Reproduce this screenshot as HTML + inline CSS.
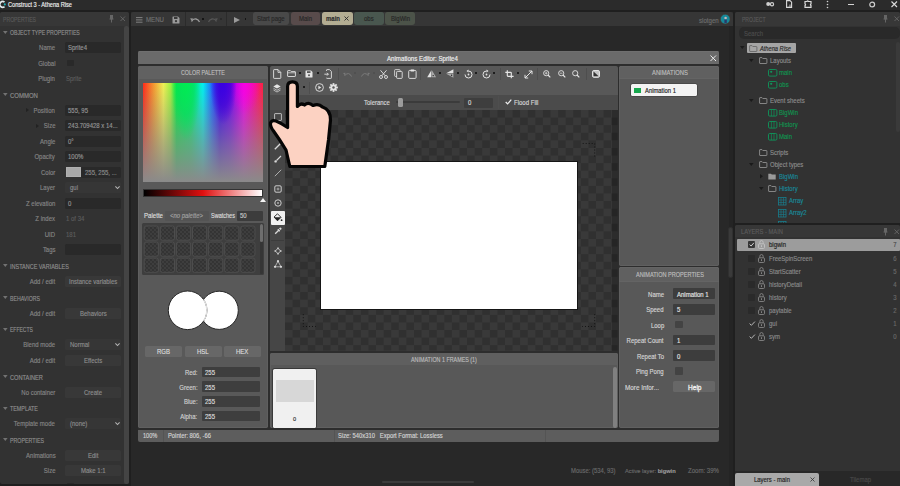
<!DOCTYPE html><html><head><meta charset="utf-8"><style>
*{margin:0;padding:0;box-sizing:border-box}
html,body{width:900px;height:486px;overflow:hidden;background:#1f1f1f;font-family:"Liberation Sans",sans-serif}
.a{position:absolute}
.t{position:absolute;white-space:pre;line-height:1;transform-origin:left center;-webkit-text-stroke-width:0.15px}
svg{position:absolute;overflow:visible}
</style></head><body><div class="a" style="left:0px;top:0px;width:900px;height:10px;background:#2b2b2b;"></div>
<svg style="left:0px;top:0px;" width="8" height="10" viewBox="0 0 8 10"><path d="M4.5 2.2A2.85 2.85 0 1 0 4.5 6.6" fill="none" stroke="#e4ecef" stroke-width="1.7"/><circle cx="4.8" cy="4.4" r="1.05" fill="#19b0b8"/></svg>
<div class="t" style="left:7.6px;top:5.15px;font-size:6.63px;color:#f0f0f0;transform:translateY(-50%) scaleX(0.847);">Construct 3 - Athena Rise</div>
<svg style="left:766px;top:1.4px;" width="9" height="6" viewBox="0 0 9 6"><circle cx="2.2" cy="3" r="2" fill="#cfcfcf"/><circle cx="6" cy="3.3" r="1.6" fill="none" stroke="#cfcfcf" stroke-width="1.2"/></svg>
<svg style="left:786px;top:0.4px;" width="7" height="8" viewBox="0 0 7 8"><path d="M0.6 0.6H4L5.6 2.2V7.4H0.6Z" fill="none" stroke="#dcdcdc" stroke-width="1.1"/><path d="M4 4.5V7.8M3 6.8L4 7.8L5 6.8" stroke="#dcdcdc" stroke-width="0.9" fill="none"/></svg>
<svg style="left:804px;top:0.4px;" width="8" height="8" viewBox="0 0 8 8"><path d="M1 1.5H3Q3.5 0.3 4.5 1.5H7V4Q5.8 4.5 7 5.5V7.3H1V5.5Q2.2 4.6 1 4Z" fill="none" stroke="#dcdcdc" stroke-width="1.2"/></svg>
<svg style="left:826px;top:0.4px;" width="3" height="8" viewBox="0 0 3 8"><circle cx="1.5" cy="1.5" r="0.8" fill="#cfcfcf"/><circle cx="1.5" cy="4.5" r="0.8" fill="#cfcfcf"/><circle cx="1.5" cy="7.5" r="0.8" fill="#cfcfcf"/></svg>
<div class="a" style="left:848px;top:3.8px;width:5.5px;height:1.1px;background:#d4d4d4;"></div>
<svg style="left:869px;top:0.8px;" width="7" height="7" viewBox="0 0 7 7"><circle cx="3.2" cy="3.5" r="2.4" fill="none" stroke="#cfcfcf" stroke-width="1.2"/></svg>
<svg style="left:891px;top:0.8px;" width="7" height="7" viewBox="0 0 7 7"><path d="M0.5 0.5L6 6M6 0.5L0.5 6" stroke="#dcdcdc" stroke-width="1.1"/></svg>
<div class="a" style="left:0px;top:12px;width:129px;height:472.4px;background:#323232;border-radius:2px;"></div>
<div class="a" style="left:0px;top:12px;width:129px;height:14px;background:#373737;border-radius:2px 2px 0 0;"></div>
<div class="t" style="left:2.8px;top:20.35px;font-size:6.74px;color:#5a5a5a;transform:translateY(-50%) scaleX(0.762);">PROPERTIES</div>
<svg style="left:109px;top:15px;" width="5" height="8" viewBox="0 0 5 8"><path d="M1 0.5H4M1.5 0.5V4H3.5V0.5M0.5 4H4.5M2.5 4V7.5" stroke="#666" stroke-width="1" fill="#666"/></svg>
<svg style="left:119.8px;top:16px;" width="6" height="6" viewBox="0 0 6 6"><path d="M0.5 0.5L5 5M5 0.5L0.5 5" stroke="#666" stroke-width="0.9"/></svg>
<div class="a" style="left:124px;top:26px;width:4.5px;height:458.2px;background:#444444;border-radius:2px;"></div>
<svg style="left:2.5px;top:30.5px;" width="5" height="4" viewBox="0 0 5 4"><path d="M0 0H4.6L2.3 3Z" fill="#727272"/></svg>
<div class="t" style="left:10px;top:33.15px;font-size:6.42px;color:#8e8e8e;transform:translateY(-50%) scaleX(0.807);">OBJECT TYPE PROPERTIES</div>
<div class="t" style="right:844.8px;top:48.00px;font-size:6.42px;color:#858585;transform-origin:right center;transform:translateY(-50%) scaleX(0.935);">Name</div>
<div class="a" style="left:65px;top:42.05px;width:56px;height:11px;background:#292929;border-radius:1.5px;"></div>
<div class="t" style="left:67.5px;top:48.00px;font-size:6.42px;color:#959595;transform:translateY(-50%) scaleX(0.935);">Sprite4</div>
<div class="t" style="right:844.8px;top:63.50px;font-size:6.42px;color:#858585;transform-origin:right center;transform:translateY(-50%) scaleX(0.935);">Global</div>
<div class="a" style="left:67.3px;top:59.75px;width:7px;height:6.6px;background:#292929;border-radius:1px;"></div>
<div class="t" style="right:844.8px;top:79.00px;font-size:6.42px;color:#858585;transform-origin:right center;transform:translateY(-50%) scaleX(0.935);">Plugin</div>
<div class="t" style="left:66px;top:79.00px;font-size:6.42px;color:#5c5c5c;transform:translateY(-50%) scaleX(0.935);">Sprite</div>
<svg style="left:2.5px;top:93.2px;" width="5" height="4" viewBox="0 0 5 4"><path d="M0 0H4.6L2.3 3Z" fill="#727272"/></svg>
<div class="t" style="left:10px;top:95.85px;font-size:6.42px;color:#8e8e8e;transform:translateY(-50%) scaleX(0.935);">COMMON</div>
<div class="t" style="right:844.8px;top:110.70px;font-size:6.42px;color:#858585;transform-origin:right center;transform:translateY(-50%) scaleX(0.935);">Position</div>
<div class="a" style="left:65px;top:104.75px;width:56px;height:11px;background:#292929;border-radius:1.5px;"></div>
<div class="t" style="left:67.5px;top:110.70px;font-size:6.42px;color:#959595;transform:translateY(-50%) scaleX(0.935);">555, 95</div>
<svg style="left:26px;top:108.25px;" width="3" height="4" viewBox="0 0 3 4"><path d="M0 0L3 2L0 4Z" fill="#222"/></svg>
<div class="t" style="right:844.8px;top:126.20px;font-size:6.42px;color:#858585;transform-origin:right center;transform:translateY(-50%) scaleX(0.935);">Size</div>
<div class="a" style="left:65px;top:120.25px;width:56px;height:11px;background:#292929;border-radius:1.5px;"></div>
<div class="t" style="left:67.5px;top:126.20px;font-size:6.42px;color:#959595;transform:translateY(-50%) scaleX(0.935);">243.709428 x 14...</div>
<svg style="left:36px;top:123.75px;" width="3" height="4" viewBox="0 0 3 4"><path d="M0 0L3 2L0 4Z" fill="#222"/></svg>
<div class="t" style="right:844.8px;top:141.70px;font-size:6.42px;color:#858585;transform-origin:right center;transform:translateY(-50%) scaleX(0.935);">Angle</div>
<div class="a" style="left:65px;top:135.75px;width:56px;height:11px;background:#292929;border-radius:1.5px;"></div>
<div class="t" style="left:67.5px;top:141.70px;font-size:6.42px;color:#959595;transform:translateY(-50%) scaleX(0.935);">0°</div>
<div class="t" style="right:844.8px;top:157.20px;font-size:6.42px;color:#858585;transform-origin:right center;transform:translateY(-50%) scaleX(0.935);">Opacity</div>
<div class="a" style="left:65px;top:151.25px;width:56px;height:11px;background:#292929;border-radius:1.5px;"></div>
<div class="t" style="left:67.5px;top:157.20px;font-size:6.42px;color:#959595;transform:translateY(-50%) scaleX(0.935);">100%</div>
<div class="t" style="right:844.8px;top:172.70px;font-size:6.42px;color:#858585;transform-origin:right center;transform:translateY(-50%) scaleX(0.935);">Color</div>
<div class="a" style="left:81.3px;top:166.75px;width:39.7px;height:11px;background:#292929;border-radius:1.5px;"></div>
<div class="a" style="left:65.8px;top:166.95px;width:15px;height:10.4px;background:#a9a9a9;border-radius:0.5px;box-shadow:inset 0 0 0 0.6px #b8b8b8;"></div>
<div class="t" style="left:85px;top:172.70px;font-size:6.42px;color:#8c8c8c;transform:translateY(-50%) scaleX(0.935);">255, 255, ...</div>
<div class="t" style="right:844.8px;top:188.20px;font-size:6.42px;color:#858585;transform-origin:right center;transform:translateY(-50%) scaleX(0.935);">Layer</div>
<div class="a" style="left:65px;top:182.25px;width:56px;height:11px;background:#363636;border-radius:1.5px;"></div>
<div class="t" style="left:69.5px;top:188.20px;font-size:6.42px;color:#8c8c8c;transform:translateY(-50%) scaleX(0.935);">gui</div>
<svg style="left:114.6px;top:186.15px;" width="5" height="3" viewBox="0 0 5 3"><path d="M0.4 0.4L2.5 2.5L4.6 0.4" stroke="#b4b4b4" stroke-width="1.05" fill="none"/></svg>
<div class="t" style="right:844.8px;top:203.70px;font-size:6.42px;color:#858585;transform-origin:right center;transform:translateY(-50%) scaleX(0.935);">Z elevation</div>
<div class="a" style="left:65px;top:197.75px;width:56px;height:11px;background:#292929;border-radius:1.5px;"></div>
<div class="t" style="left:67.5px;top:203.70px;font-size:6.42px;color:#959595;transform:translateY(-50%) scaleX(0.935);">0</div>
<div class="t" style="right:844.8px;top:219.20px;font-size:6.42px;color:#858585;transform-origin:right center;transform:translateY(-50%) scaleX(0.935);">Z index</div>
<div class="t" style="left:66px;top:219.20px;font-size:6.42px;color:#5c5c5c;transform:translateY(-50%) scaleX(0.935);">1 of 34</div>
<div class="t" style="right:844.8px;top:234.70px;font-size:6.42px;color:#858585;transform-origin:right center;transform:translateY(-50%) scaleX(0.935);">UID</div>
<div class="t" style="left:66px;top:234.70px;font-size:6.42px;color:#5c5c5c;transform:translateY(-50%) scaleX(0.935);">181</div>
<div class="t" style="right:844.8px;top:250.20px;font-size:6.42px;color:#858585;transform-origin:right center;transform:translateY(-50%) scaleX(0.935);">Tags</div>
<div class="a" style="left:65px;top:244.25px;width:56px;height:11px;background:#292929;border-radius:1.5px;"></div>
<div class="t" style="left:67.5px;top:250.20px;font-size:6.42px;color:#959595;transform:translateY(-50%) ;"></div>
<svg style="left:2.5px;top:264.40000000000003px;" width="5" height="4" viewBox="0 0 5 4"><path d="M0 0H4.6L2.3 3Z" fill="#727272"/></svg>
<div class="t" style="left:10px;top:267.05px;font-size:6.42px;color:#8e8e8e;transform:translateY(-50%) scaleX(0.855);">INSTANCE VARIABLES</div>
<div class="t" style="right:844.8px;top:281.90px;font-size:6.42px;color:#858585;transform-origin:right center;transform:translateY(-50%) scaleX(0.935);">Add / edit</div>
<div class="a" style="left:65px;top:275.95px;width:56px;height:11px;background:#383838;border-radius:1.5px;"></div>
<div class="t" style="left:68.82px;top:281.90px;font-size:6.42px;color:#8c8c8c;transform:translateY(-50%) scaleX(0.935);">Instance variables</div>
<svg style="left:2.5px;top:296.1px;" width="5" height="4" viewBox="0 0 5 4"><path d="M0 0H4.6L2.3 3Z" fill="#727272"/></svg>
<div class="t" style="left:10px;top:298.75px;font-size:6.42px;color:#8e8e8e;transform:translateY(-50%) scaleX(0.811);">BEHAVIORS</div>
<div class="t" style="right:844.8px;top:313.60px;font-size:6.42px;color:#858585;transform-origin:right center;transform:translateY(-50%) scaleX(0.935);">Add / edit</div>
<div class="a" style="left:65px;top:307.65px;width:56px;height:11px;background:#383838;border-radius:1.5px;"></div>
<div class="t" style="left:79.66px;top:313.60px;font-size:6.42px;color:#8c8c8c;transform:translateY(-50%) scaleX(0.935);">Behaviors</div>
<svg style="left:2.5px;top:327.8px;" width="5" height="4" viewBox="0 0 5 4"><path d="M0 0H4.6L2.3 3Z" fill="#727272"/></svg>
<div class="t" style="left:10px;top:330.45px;font-size:6.42px;color:#8e8e8e;transform:translateY(-50%) scaleX(0.786);">EFFECTS</div>
<div class="t" style="right:844.8px;top:345.30px;font-size:6.42px;color:#858585;transform-origin:right center;transform:translateY(-50%) scaleX(0.935);">Blend mode</div>
<div class="a" style="left:65px;top:339.35px;width:56px;height:11px;background:#363636;border-radius:1.5px;"></div>
<div class="t" style="left:69.5px;top:345.30px;font-size:6.42px;color:#8c8c8c;transform:translateY(-50%) scaleX(0.935);">Normal</div>
<svg style="left:114.6px;top:343.25px;" width="5" height="3" viewBox="0 0 5 3"><path d="M0.4 0.4L2.5 2.5L4.6 0.4" stroke="#b4b4b4" stroke-width="1.05" fill="none"/></svg>
<div class="t" style="right:844.8px;top:360.80px;font-size:6.42px;color:#858585;transform-origin:right center;transform:translateY(-50%) scaleX(0.935);">Add / edit</div>
<div class="a" style="left:65px;top:354.85px;width:56px;height:11px;background:#383838;border-radius:1.5px;"></div>
<div class="t" style="left:83.88px;top:360.80px;font-size:6.42px;color:#8c8c8c;transform:translateY(-50%) scaleX(0.935);">Effects</div>
<svg style="left:2.5px;top:375.0px;" width="5" height="4" viewBox="0 0 5 4"><path d="M0 0H4.6L2.3 3Z" fill="#727272"/></svg>
<div class="t" style="left:10px;top:377.65px;font-size:6.42px;color:#8e8e8e;transform:translateY(-50%) scaleX(0.884);">CONTAINER</div>
<div class="t" style="right:844.8px;top:392.50px;font-size:6.42px;color:#858585;transform-origin:right center;transform:translateY(-50%) scaleX(0.935);">No container</div>
<div class="a" style="left:65px;top:386.55px;width:56px;height:11px;background:#383838;border-radius:1.5px;"></div>
<div class="t" style="left:84.00px;top:392.50px;font-size:6.42px;color:#8c8c8c;transform:translateY(-50%) scaleX(0.935);">Create</div>
<svg style="left:2.5px;top:406.7px;" width="5" height="4" viewBox="0 0 5 4"><path d="M0 0H4.6L2.3 3Z" fill="#727272"/></svg>
<div class="t" style="left:10px;top:409.35px;font-size:6.42px;color:#8e8e8e;transform:translateY(-50%) scaleX(0.838);">TEMPLATE</div>
<div class="t" style="right:844.8px;top:424.20px;font-size:6.42px;color:#858585;transform-origin:right center;transform:translateY(-50%) scaleX(0.935);">Template mode</div>
<div class="a" style="left:65px;top:418.25px;width:56px;height:11px;background:#363636;border-radius:1.5px;"></div>
<div class="t" style="left:69.5px;top:424.20px;font-size:6.42px;color:#8c8c8c;transform:translateY(-50%) scaleX(0.935);">(none)</div>
<svg style="left:114.6px;top:422.15px;" width="5" height="3" viewBox="0 0 5 3"><path d="M0.4 0.4L2.5 2.5L4.6 0.4" stroke="#b4b4b4" stroke-width="1.05" fill="none"/></svg>
<svg style="left:2.5px;top:438.40000000000003px;" width="5" height="4" viewBox="0 0 5 4"><path d="M0 0H4.6L2.3 3Z" fill="#727272"/></svg>
<div class="t" style="left:10px;top:441.05px;font-size:6.42px;color:#8e8e8e;transform:translateY(-50%) scaleX(0.824);">PROPERTIES</div>
<div class="t" style="right:844.8px;top:455.90px;font-size:6.42px;color:#858585;transform-origin:right center;transform:translateY(-50%) scaleX(0.935);">Animations</div>
<div class="a" style="left:65px;top:449.95px;width:56px;height:11px;background:#383838;border-radius:1.5px;"></div>
<div class="t" style="left:87.83px;top:455.90px;font-size:6.42px;color:#8c8c8c;transform:translateY(-50%) scaleX(0.935);">Edit</div>
<div class="t" style="right:844.8px;top:471.40px;font-size:6.42px;color:#858585;transform-origin:right center;transform:translateY(-50%) scaleX(0.935);">Size</div>
<div class="a" style="left:65px;top:465.45px;width:56px;height:11px;background:#383838;border-radius:1.5px;"></div>
<div class="t" style="left:80.66px;top:471.40px;font-size:6.42px;color:#8c8c8c;transform:translateY(-50%) scaleX(0.935);">Make 1:1</div>
<div class="t" style="right:844.8px;top:486.90px;font-size:6.42px;color:#858585;transform-origin:right center;transform:translateY(-50%) scaleX(0.935);">Initially visible</div>
<div class="a" style="left:67.3px;top:483.15px;width:7px;height:6.6px;background:#292929;border-radius:1px;"></div>
<div class="a" style="left:0px;top:484.4px;width:131px;height:2px;background:#1f1f1f;"></div>
<div class="a" style="left:131px;top:12px;width:602px;height:474px;background:#282828;"></div>
<div class="a" style="left:131px;top:12px;width:602px;height:14px;background:#363636;border-radius:2px 2px 0 0;"></div>
<svg style="left:135.5px;top:16.5px;" width="7" height="6" viewBox="0 0 7 6"><path d="M0 0.6H6.5M0 2.9H6.5M0 5.2H6.5" stroke="#8a8a8a" stroke-width="0.9"/></svg>
<div class="t" style="left:146px;top:19.95px;font-size:6.42px;color:#707070;transform:translateY(-50%) scaleX(0.952);">MENU</div>
<svg style="left:172px;top:15.5px;" width="8" height="8" viewBox="0 0 8 8"><path d="M0.5 1Q0.5 0.5 1 0.5H6L7.5 2V7Q7.5 7.5 7 7.5H1Q0.5 7.5 0.5 7Z" fill="#9a9a9a"/><rect x="2" y="1" width="3.5" height="2" fill="#383838"/><circle cx="4" cy="5.2" r="1.1" fill="#383838"/></svg>
<div class="a" style="left:185.3px;top:12px;width:0.9px;height:14px;background:#2b2b2b;"></div>
<svg style="left:190px;top:16.5px;" width="10" height="6" viewBox="0 0 10 6"><path d="M1.5 4.5Q3 1.5 6 2Q8.5 2.5 9.5 5" stroke="#9a9a9a" stroke-width="1.3" fill="none"/><path d="M0 1.5L2.8 1.2L2.2 4.3Z" fill="#9a9a9a"/></svg>
<div class="a" style="left:202px;top:18.2px;width:1.9px;height:1.9px;background:#151515;"></div>
<svg style="left:208px;top:16.5px;" width="10" height="6" viewBox="0 0 10 6"><path d="M8.5 4.5Q7 1.5 4 2Q1.5 2.5 0.5 5" stroke="#555" stroke-width="1.3" fill="none"/><path d="M10 1.5L7.2 1.2L7.8 4.3Z" fill="#555"/></svg>
<div class="a" style="left:220.3px;top:18.2px;width:1.9px;height:1.9px;background:#2a2a2a;"></div>
<div class="a" style="left:226.2px;top:12px;width:0.9px;height:14px;background:#2b2b2b;"></div>
<svg style="left:234px;top:16.5px;" width="6" height="6" viewBox="0 0 6 6"><path d="M0 0L6 3L0 6Z" fill="#9a9a9a"/></svg>
<div class="a" style="left:244.5px;top:18.2px;width:1.9px;height:1.9px;background:#151515;"></div>
<div class="a" style="left:252.8px;top:12.3px;width:36.69999999999999px;height:12.5px;background:#494949;border-radius:2.5px 2.5px 3px 3px;"></div>
<div class="t" style="left:257.31px;top:19.15px;font-size:6.42px;color:#262626;transform:translateY(-50%) scaleX(0.935);">Start page</div>
<div class="a" style="left:290.6px;top:12.3px;width:29.69999999999999px;height:12.5px;background:#584b4b;border-radius:2.5px 2.5px 3px 3px;"></div>
<div class="t" style="left:298.95px;top:19.15px;font-size:6.42px;color:#262626;transform:translateY(-50%) scaleX(0.935);">Main</div>
<div class="a" style="left:321.5px;top:12.3px;width:31.5px;height:12.5px;background:#b3ad92;border-radius:2.5px 2.5px 3px 3px;"></div>
<div class="t" style="left:326.0px;top:19.15px;font-size:6.42px;color:#2a2a2a;transform:translateY(-50%) scaleX(0.934);font-weight:bold;">main</div>
<svg style="left:344px;top:16.3px;" width="5" height="5" viewBox="0 0 5 5"><path d="M0.5 0.5L4.5 4.5M4.5 0.5L0.5 4.5" stroke="#2a2a2a" stroke-width="0.9"/></svg>
<div class="a" style="left:354.3px;top:12.3px;width:29.30000000000001px;height:12.5px;background:#49574f;border-radius:2.5px 2.5px 3px 3px;"></div>
<div class="t" style="left:364.11px;top:19.15px;font-size:6.42px;color:#262626;transform:translateY(-50%) scaleX(0.935);">obs</div>
<div class="a" style="left:385px;top:12.3px;width:30.399999999999977px;height:12.5px;background:#4c5349;border-radius:2.5px 2.5px 3px 3px;"></div>
<div class="t" style="left:390.70px;top:19.15px;font-size:6.42px;color:#262626;transform:translateY(-50%) scaleX(0.935);">BigWin</div>
<div class="t" style="left:699px;top:20.75px;font-size:6.42px;color:#6e6e6e;transform:translateY(-50%) scaleX(0.952);">slotgen</div>
<svg style="left:719.8px;top:14.2px;" width="11" height="11" viewBox="0 0 11 11"><circle cx="5.2" cy="5.1" r="4.9" fill="#17899a" stroke="#4a3428" stroke-width="0.6"/><circle cx="5.6" cy="4" r="1.3" fill="#c9b4b4"/><path d="M4.4 5.6H6.8V9H4.4Z" fill="#2c3868"/></svg>
<div class="a" style="left:728.8px;top:26px;width:4.2px;height:460px;background:#242424;"></div>
<div class="a" style="left:728.2px;top:227.4px;width:4.6px;height:51px;background:#3a3a3a;border-radius:2.3px;border:0.6px solid #303030;"></div>
<div class="a" style="left:381.5px;top:480.5px;width:92px;height:2.5px;background:#3b3b3b;border-radius:1.5px;"></div>
<div class="t" style="left:571px;top:471.45px;font-size:6.42px;color:#6a6a6a;transform:translateY(-50%) scaleX(0.919);">Mouse: (534, 93)</div>
<div class="t" style="left:625px;top:471px;font-size:6px;color:#6a6a6a;transform:translateY(-50%) scaleX(0.95)">Active layer: <b style="color:#9a9a9a">bigwin</b></div>
<div class="t" style="left:688px;top:471.45px;font-size:6.42px;color:#6a6a6a;transform:translateY(-50%) scaleX(0.944);">Zoom: 39%</div>
<div class="a" style="left:138px;top:50.9px;width:581.3px;height:391.1px;background:#2d2d2d;border-radius:2px;"></div>
<div class="a" style="left:138px;top:50.9px;width:581.3px;height:12.7px;background:#6a6a6a;border-radius:2px 2px 0 0;box-shadow:inset 0 0.7px 0 #727272;"></div>
<div class="t" style="left:387.10px;top:58.65px;font-size:6.63px;color:#f0f0f0;transform:translateY(-50%) scaleX(0.926);">Animations Editor: Sprite4</div>
<svg style="left:709.5px;top:54.5px;" width="6.5" height="6.5" viewBox="0 0 6.5 6.5"><path d="M0.5 0.5L6 6M6 0.5L0.5 6" stroke="#e8e8e8" stroke-width="1"/></svg>
<div class="a" style="left:138px;top:66px;width:129.8px;height:362.3px;background:#595959;border-radius:2.5px;box-shadow:inset 0 0 0 0.7px #636363;"></div>
<div class="a" style="left:138px;top:66px;width:129.8px;height:12.5px;background:#616161;border-radius:2px 2px 0 0;"></div>
<div class="t" style="left:181.00px;top:72.95px;font-size:6.42px;color:#bcbcbc;transform:translateY(-50%) scaleX(0.835);">COLOR PALETTE</div>
<div class="a" style="left:143.4px;top:83.3px;width:119.5px;height:98.5px;background:radial-gradient(ellipse 12% 58% at 36% 0%,rgba(0,235,80,0.85) 0%,rgba(0,225,90,0.65) 55%,rgba(0,220,90,0) 100%),radial-gradient(ellipse 11% 42% at 67% 0%,rgba(55,0,225,0.9) 0%,rgba(60,0,215,0.6) 55%,rgba(60,0,215,0) 100%),radial-gradient(ellipse 13% 32% at 85% 0%,rgba(250,0,225,0.8) 0%,rgba(240,0,210,0) 100%),linear-gradient(to bottom,rgba(138,138,138,0) 0%,rgba(138,138,138,0.3) 30%,rgba(138,138,138,0.62) 60%,rgba(138,138,138,1) 100%),linear-gradient(to right,#ff2a1a 0%,#f59a30 9%,#f0f055 17%,#a0f040 23%,#00f040 28%,#00f070 40%,#00f0f0 50%,#2060ff 58%,#3800f0 64%,#7000f0 73%,#f000e8 84%,#ff2040 100%);"></div>
<div class="a" style="left:143px;top:188.6px;width:120.3px;height:8.8px;background:linear-gradient(to right,#000 0%,#e01010 50%,#fff 100%);border:0.6px solid #333;"></div>
<svg style="left:259.5px;top:197.6px;" width="6" height="4" viewBox="0 0 6 4"><path d="M0 4L3 0L6 4Z" fill="#f4f4f4"/></svg>
<div class="t" style="left:144px;top:216.45px;font-size:6.42px;color:#dedede;transform:translateY(-50%) scaleX(0.951);">Palette</div>
<div class="a" style="left:164.6px;top:211px;width:44px;height:10px;background:#545454;border-radius:1px;"></div>
<div class="t" style="left:170.10px;top:216.45px;font-size:6.42px;color:#a0a0a0;transform:translateY(-50%) scaleX(0.924);font-style:italic;">&lt;no palette&gt;</div>
<div class="t" style="left:210.9px;top:216.45px;font-size:6.42px;color:#dedede;transform:translateY(-50%) scaleX(0.862);">Swatches</div>
<div class="a" style="left:237px;top:211px;width:26.3px;height:10px;background:#3c3c3c;border-radius:1px;"></div>
<div class="t" style="left:239.5px;top:216.45px;font-size:6.42px;color:#c8c8c8;transform:translateY(-50%) scaleX(0.935);">50</div>
<div class="a" style="left:142px;top:222.5px;width:122.3px;height:52px;background:#3e3e3e;border-radius:1.5px;"></div>
<svg style="left:142px;top:222.5px;" width="122.3" height="52" viewBox="0 0 122.3 52"><defs><pattern id="sw" x="0" y="0" width="4" height="4" patternUnits="userSpaceOnUse"><rect width="4" height="4" fill="#3a3a3a"/><circle cx="1" cy="1" r="0.9" fill="#303030"/><circle cx="3" cy="3" r="0.9" fill="#303030"/><circle cx="3" cy="1" r="0.7" fill="#454545"/><circle cx="1" cy="3" r="0.7" fill="#454545"/></pattern></defs><rect x="2.20" y="3.00" width="14.2" height="14.2" rx="2" fill="url(#sw)" stroke="#4d4d4d" stroke-width="1"/><rect x="18.30" y="3.00" width="14.2" height="14.2" rx="2" fill="url(#sw)" stroke="#4d4d4d" stroke-width="1"/><rect x="34.40" y="3.00" width="14.2" height="14.2" rx="2" fill="url(#sw)" stroke="#4d4d4d" stroke-width="1"/><rect x="50.50" y="3.00" width="14.2" height="14.2" rx="2" fill="url(#sw)" stroke="#4d4d4d" stroke-width="1"/><rect x="66.60" y="3.00" width="14.2" height="14.2" rx="2" fill="url(#sw)" stroke="#4d4d4d" stroke-width="1"/><rect x="82.70" y="3.00" width="14.2" height="14.2" rx="2" fill="url(#sw)" stroke="#4d4d4d" stroke-width="1"/><rect x="98.80" y="3.00" width="14.2" height="14.2" rx="2" fill="url(#sw)" stroke="#4d4d4d" stroke-width="1"/><rect x="2.20" y="19.05" width="14.2" height="14.2" rx="2" fill="url(#sw)" stroke="#4d4d4d" stroke-width="1"/><rect x="18.30" y="19.05" width="14.2" height="14.2" rx="2" fill="url(#sw)" stroke="#4d4d4d" stroke-width="1"/><rect x="34.40" y="19.05" width="14.2" height="14.2" rx="2" fill="url(#sw)" stroke="#4d4d4d" stroke-width="1"/><rect x="50.50" y="19.05" width="14.2" height="14.2" rx="2" fill="url(#sw)" stroke="#4d4d4d" stroke-width="1"/><rect x="66.60" y="19.05" width="14.2" height="14.2" rx="2" fill="url(#sw)" stroke="#4d4d4d" stroke-width="1"/><rect x="82.70" y="19.05" width="14.2" height="14.2" rx="2" fill="url(#sw)" stroke="#4d4d4d" stroke-width="1"/><rect x="98.80" y="19.05" width="14.2" height="14.2" rx="2" fill="url(#sw)" stroke="#4d4d4d" stroke-width="1"/><rect x="2.20" y="35.10" width="14.2" height="14.2" rx="2" fill="url(#sw)" stroke="#4d4d4d" stroke-width="1"/><rect x="18.30" y="35.10" width="14.2" height="14.2" rx="2" fill="url(#sw)" stroke="#4d4d4d" stroke-width="1"/><rect x="34.40" y="35.10" width="14.2" height="14.2" rx="2" fill="url(#sw)" stroke="#4d4d4d" stroke-width="1"/><rect x="50.50" y="35.10" width="14.2" height="14.2" rx="2" fill="url(#sw)" stroke="#4d4d4d" stroke-width="1"/><rect x="66.60" y="35.10" width="14.2" height="14.2" rx="2" fill="url(#sw)" stroke="#4d4d4d" stroke-width="1"/><rect x="82.70" y="35.10" width="14.2" height="14.2" rx="2" fill="url(#sw)" stroke="#4d4d4d" stroke-width="1"/><rect x="98.80" y="35.10" width="14.2" height="14.2" rx="2" fill="url(#sw)" stroke="#4d4d4d" stroke-width="1"/></svg>
<div class="a" style="left:259.5px;top:223.5px;width:3.5px;height:50px;background:#353535;border-radius:1.5px;"></div>
<div class="a" style="left:259.5px;top:224px;width:3.5px;height:17.5px;background:#6e6e6e;border-radius:1.5px;"></div>
<svg style="left:166px;top:289px;" width="76" height="44" viewBox="0 0 76 44"><circle cx="53.2" cy="21.3" r="19.1" fill="#fff" stroke="#262626" stroke-width="1"/><circle cx="21.6" cy="21.3" r="19.3" fill="#fff" stroke="#262626" stroke-width="1"/><path d="M37.6 10.6A19.3 19.3 0 0 1 37.6 32" stroke="#e2e2e2" stroke-width="1.2" fill="none"/></svg>
<div class="a" style="left:145.3px;top:345.5px;width:36.69999999999999px;height:11.5px;background:#676767;border-radius:1.5px;"></div>
<div class="t" style="left:157.15px;top:352.45px;font-size:6.42px;color:#dcdcdc;transform:translateY(-50%) scaleX(0.935);">RGB</div>
<div class="a" style="left:185px;top:345.5px;width:36.599999999999994px;height:11.5px;background:#676767;border-radius:1.5px;"></div>
<div class="t" style="left:197.46px;top:352.45px;font-size:6.42px;color:#dcdcdc;transform:translateY(-50%) scaleX(0.935);">HSL</div>
<div class="a" style="left:224px;top:345.5px;width:36.60000000000002px;height:11.5px;background:#676767;border-radius:1.5px;"></div>
<div class="t" style="left:236.13px;top:352.45px;font-size:6.42px;color:#dcdcdc;transform:translateY(-50%) scaleX(0.935);">HEX</div>
<div class="t" style="right:702.7px;top:372.85px;font-size:6.42px;color:#d0d0d0;transform-origin:right center;transform:translateY(-50%) scaleX(0.935);">Red:</div>
<div class="a" style="left:202px;top:366.6px;width:58px;height:10.5px;background:#3e3e3e;border-radius:1px;"></div>
<div class="t" style="left:205px;top:372.85px;font-size:6.42px;color:#dedede;transform:translateY(-50%) scaleX(0.935);">255</div>
<div class="t" style="right:702.7px;top:387.57px;font-size:6.42px;color:#d0d0d0;transform-origin:right center;transform:translateY(-50%) scaleX(0.935);">Green:</div>
<div class="a" style="left:202px;top:381.32000000000005px;width:58px;height:10.5px;background:#3e3e3e;border-radius:1px;"></div>
<div class="t" style="left:205px;top:387.57px;font-size:6.42px;color:#dedede;transform:translateY(-50%) scaleX(0.935);">255</div>
<div class="t" style="right:702.7px;top:402.29px;font-size:6.42px;color:#d0d0d0;transform-origin:right center;transform:translateY(-50%) scaleX(0.935);">Blue:</div>
<div class="a" style="left:202px;top:396.04px;width:58px;height:10.5px;background:#3e3e3e;border-radius:1px;"></div>
<div class="t" style="left:205px;top:402.29px;font-size:6.42px;color:#dedede;transform:translateY(-50%) scaleX(0.935);">255</div>
<div class="t" style="right:702.7px;top:417.01px;font-size:6.42px;color:#d0d0d0;transform-origin:right center;transform:translateY(-50%) scaleX(0.935);">Alpha:</div>
<div class="a" style="left:202px;top:410.76000000000005px;width:58px;height:10.5px;background:#3e3e3e;border-radius:1px;"></div>
<div class="t" style="left:205px;top:417.01px;font-size:6.42px;color:#dedede;transform:translateY(-50%) scaleX(0.935);">255</div>
<div class="a" style="left:138px;top:430.4px;width:581.3px;height:11.3px;background:#5d5d5d;border-radius:0 0 2px 2px;"></div>
<div class="a" style="left:163px;top:430.4px;width:0.8px;height:11.3px;background:#545454;"></div>
<div class="a" style="left:334px;top:430.4px;width:0.8px;height:11.3px;background:#545454;"></div>
<div class="a" style="left:544.5px;top:430.4px;width:0.8px;height:11.3px;background:#545454;"></div>
<div class="t" style="left:143.4px;top:436.45px;font-size:6.42px;color:#d4d4d4;transform:translateY(-50%) scaleX(0.877);">100%</div>
<div class="t" style="left:168px;top:436.45px;font-size:6.42px;color:#d4d4d4;transform:translateY(-50%) scaleX(0.906);">Pointer: 806, -66</div>
<div class="t" style="left:338px;top:436.45px;font-size:6.42px;color:#d4d4d4;transform:translateY(-50%) scaleX(0.911);">Size: 540x310   Export Format: Lossless</div>
<div class="a" style="left:270px;top:66px;width:347.8px;height:284.8px;background:#3a3a3a;border-radius:2px 2px 0 0;"></div>
<div class="a" style="left:270px;top:66px;width:347.8px;height:29.1px;background:#585858;border-radius:2px 2px 0 0;"></div>
<div class="a" style="left:270px;top:95.1px;width:347.8px;height:15.1px;background:#4b4b4b;"></div>
<div class="a" style="left:270px;top:110.2px;width:15.2px;height:240.6px;background:#464646;"></div>
<svg style="left:285.2px;top:110.2px;" width="332.6" height="240.6" viewBox="0 0 332.6 240.6"><defs><pattern id="ck" x="0" y="0" width="15.172" height="15.172" patternUnits="userSpaceOnUse"><rect width="15.172" height="15.172" fill="#303030"/><rect x="7.586" width="7.586" height="7.586" fill="#393939"/><rect y="7.586" width="7.586" height="7.586" fill="#393939"/></pattern></defs><rect width="332.6" height="240.6" fill="url(#ck)"/></svg>
<div class="a" style="left:611.6px;top:110.2px;width:6px;height:240.6px;background:rgba(0,0,0,0.22);"></div>
<div class="a" style="left:321.2px;top:161.7px;width:256.1px;height:147.7px;background:#ffffff;outline:0.7px solid #151515;"></div>
<svg style="left:285.2px;top:110.2px;" width="332.6" height="240.6" viewBox="0 0 332.6 240.6"><g stroke="#111" stroke-width="0.9" stroke-dasharray="1 2" fill="none"><path d="M18.3 204.2V216.5H30.8"/><path d="M309.7 204.2V216.5H297.2"/><path d="M309.7 46.5V33.5H297.2"/></g></svg>
<div class="a" style="left:619.1px;top:66px;width:100.2px;height:199.5px;background:#585858;border-radius:2.5px;box-shadow:inset 0 0 0 0.7px #636363;"></div>
<div class="a" style="left:619.1px;top:66px;width:100.2px;height:12.9px;background:#606060;border-radius:2.5px 2.5px 0 0;box-shadow:inset 0 0 0 0.7px #666;"></div>
<div class="t" style="left:651.50px;top:72.95px;font-size:6.42px;color:#bcbcbc;transform:translateY(-50%) scaleX(0.912);">ANIMATIONS</div>
<div class="a" style="left:630.6px;top:84.3px;width:66px;height:11.7px;background:#f3f3f3;border-radius:1.5px;box-shadow:0 0 0 0.6px #3a3a3a;"></div>
<div class="a" style="left:634.3px;top:87.8px;width:6.6px;height:5.5px;background:#17a84e;"></div>
<div class="t" style="left:644.8px;top:91.05px;font-size:6.42px;color:#1a1a1a;transform:translateY(-50%) scaleX(0.914);">Animation 1</div>
<div class="a" style="left:619.1px;top:267px;width:100.2px;height:161.4px;background:#585858;border-radius:2.5px;box-shadow:inset 0 0 0 0.7px #636363;"></div>
<div class="a" style="left:619.1px;top:267px;width:100.2px;height:14.6px;background:#606060;border-radius:2.5px 2.5px 0 0;box-shadow:inset 0 0 0 0.7px #666;"></div>
<div class="t" style="left:635.50px;top:274.85px;font-size:6.42px;color:#bcbcbc;transform:translateY(-50%) scaleX(0.869);">ANIMATION PROPERTIES</div>
<div class="t" style="right:236.20000000000005px;top:294.85px;font-size:6.42px;color:#d4d4d4;transform-origin:right center;transform:translateY(-50%) scaleX(0.935);">Name</div>
<div class="a" style="left:673.3px;top:288.40000000000003px;width:41.9px;height:10.7px;background:#3d3d3d;border-radius:1px;"></div>
<div class="t" style="left:676.5px;top:294.85px;font-size:6.42px;color:#e4e4e4;transform:translateY(-50%) scaleX(0.935);">Animation 1</div>
<div class="t" style="right:236.20000000000005px;top:310.30px;font-size:6.42px;color:#d4d4d4;transform-origin:right center;transform:translateY(-50%) scaleX(0.935);">Speed</div>
<div class="a" style="left:673.3px;top:303.85px;width:41.9px;height:10.7px;background:#3d3d3d;border-radius:1px;"></div>
<div class="t" style="left:676.5px;top:310.30px;font-size:6.42px;color:#e4e4e4;transform:translateY(-50%) scaleX(0.935);">5</div>
<div class="t" style="right:236.20000000000005px;top:325.75px;font-size:6.42px;color:#d4d4d4;transform-origin:right center;transform:translateY(-50%) scaleX(0.935);">Loop</div>
<div class="a" style="left:675.4px;top:321.09999999999997px;width:7.4px;height:7.2px;background:#434343;border-radius:1px;"></div>
<div class="t" style="right:236.20000000000005px;top:341.20px;font-size:6.42px;color:#d4d4d4;transform-origin:right center;transform:translateY(-50%) scaleX(0.935);">Repeat Count</div>
<div class="a" style="left:673.3px;top:334.75px;width:41.9px;height:10.7px;background:#3d3d3d;border-radius:1px;"></div>
<div class="t" style="left:676.5px;top:341.20px;font-size:6.42px;color:#e4e4e4;transform:translateY(-50%) scaleX(0.935);">1</div>
<div class="t" style="right:236.20000000000005px;top:356.65px;font-size:6.42px;color:#d4d4d4;transform-origin:right center;transform:translateY(-50%) scaleX(0.935);">Repeat To</div>
<div class="a" style="left:673.3px;top:350.20000000000005px;width:41.9px;height:10.7px;background:#3d3d3d;border-radius:1px;"></div>
<div class="t" style="left:676.5px;top:356.65px;font-size:6.42px;color:#e4e4e4;transform:translateY(-50%) scaleX(0.935);">0</div>
<div class="t" style="right:236.20000000000005px;top:372.10px;font-size:6.42px;color:#d4d4d4;transform-origin:right center;transform:translateY(-50%) scaleX(0.935);">Ping Pong</div>
<div class="a" style="left:675.4px;top:367.45px;width:7.4px;height:7.2px;background:#434343;border-radius:1px;"></div>
<div class="t" style="left:625px;top:387.65px;font-size:6.42px;color:#d4d4d4;transform:translateY(-50%) scaleX(0.993);">More Infor...</div>
<div class="a" style="left:673.3px;top:380.8px;width:41.9px;height:11.7px;background:#676767;border-radius:1.5px;"></div>
<div class="t" style="left:687.55px;top:387.75px;font-size:6.63px;color:#f0f0f0;transform:translateY(-50%) scaleX(0.990);-webkit-text-stroke-width:0.3px;">Help</div>
<div class="a" style="left:270px;top:352.9px;width:347.8px;height:75.5px;background:#585858;border-radius:2.5px;box-shadow:inset 0 0 0 0.7px #636363;"></div>
<div class="a" style="left:270px;top:352.9px;width:347.8px;height:12.6px;background:#5f5f5f;border-radius:2px 2px 0 0;"></div>
<div class="t" style="left:411.00px;top:359.75px;font-size:6.42px;color:#bcbcbc;transform:translateY(-50%) scaleX(0.839);">ANIMATION 1 FRAMES (1)</div>
<div class="a" style="left:273.4px;top:368.7px;width:43px;height:59.1px;background:#f0f0f0;border-radius:1.5px;box-shadow:0 0 0 0.7px #2e2e2e;"></div>
<div class="a" style="left:276px;top:380.2px;width:38px;height:21.8px;background:#d7d7d7;"></div>
<div class="t" style="left:293.44px;top:419.45px;font-size:5.99px;color:#2a2a2a;transform:translateY(-50%) scaleX(0.935);">0</div>
<div class="a" style="left:613px;top:366.8px;width:4px;height:61px;background:#808080;border-radius:2px;"></div>
<div class="a" style="left:735px;top:12px;width:165px;height:211px;background:#323232;border-radius:2px 2px 0 0;"></div>
<div class="a" style="left:735px;top:12px;width:165px;height:14px;background:#373737;border-radius:2px 2px 0 0;"></div>
<div class="t" style="left:741.7px;top:20.35px;font-size:6.74px;color:#5a5a5a;transform:translateY(-50%) scaleX(0.747);">PROJECT</div>
<svg style="left:883px;top:15px;" width="5" height="8" viewBox="0 0 5 8"><path d="M1 0.5H4M1.5 0.5V4H3.5V0.5M0.5 4H4.5M2.5 4V7.5" stroke="#666" stroke-width="1" fill="#666"/></svg>
<svg style="left:893.5px;top:16px;" width="6" height="6" viewBox="0 0 6 6"><path d="M0.5 0.5L5 5M5 0.5L0.5 5" stroke="#666" stroke-width="0.9"/></svg>
<div class="a" style="left:738.5px;top:27.4px;width:161px;height:11.3px;background:#292929;border-radius:5px;"></div>
<div class="t" style="left:744px;top:34.25px;font-size:6.42px;color:#4c4c4c;transform:translateY(-50%) scaleX(0.935);">Search</div>
<div class="a" style="left:895.5px;top:42px;width:4px;height:90px;background:#3a3a3a;border-radius:2px;"></div>
<svg style="left:739.5px;top:46.3px;" width="5" height="3.5" viewBox="0 0 5 3.5"><path d="M0 0H4.6L2.3 3Z" fill="#1a1a1a"/></svg>
<div class="a" style="left:746.7px;top:42.5px;width:49px;height:10.9px;background:#a5a5a5;border-radius:1px;"></div>
<svg style="left:748.8px;top:44.5px;" width="8.5" height="7" viewBox="0 0 8.5 7"><path d="M0.6 1Q0.6 0.6 1 0.6H3L3.8 1.5H7.4Q7.9 1.5 7.9 2V6Q7.9 6.5 7.4 6.5H1Q0.6 6.5 0.6 6Z" fill="none" stroke="#6a6a6a" stroke-width="0.9"/></svg>
<div class="t" style="left:759.5px;top:48.65px;font-size:6.42px;color:#262626;transform:translateY(-50%) scaleX(0.886);font-style:italic;">Athena Rise</div>
<svg style="left:749px;top:59.1px;" width="5" height="3.5" viewBox="0 0 5 3.5"><path d="M0 0H4.6L2.3 3Z" fill="#1a1a1a"/></svg>
<svg style="left:758.7px;top:57.1px;" width="8.5" height="7" viewBox="0 0 8.5 7"><path d="M0.6 1Q0.6 0.6 1 0.6H3L3.8 1.5H7.4Q7.9 1.5 7.9 2V6Q7.9 6.5 7.4 6.5H1Q0.6 6.5 0.6 6Z" fill="none" stroke="#8e8e8e" stroke-width="0.9"/></svg>
<div class="t" style="left:770px;top:61.25px;font-size:6.42px;color:#8c8c8c;transform:translateY(-50%) scaleX(0.935);">Layouts</div>
<svg style="left:767.8px;top:68.9px;" width="9.4" height="7.6" viewBox="0 0 9.4 7.6"><rect x="0.5" y="0.5" width="8.4" height="6.6" rx="1.2" fill="none" stroke="#10935a" stroke-width="0.95"/><circle cx="3.2" cy="2.8" r="1.1" fill="#10935a"/><path d="M5.8 1V5.6H2" stroke="#2a3a30" stroke-width="0.6" fill="none"/></svg>
<div class="t" style="left:779.2px;top:72.95px;font-size:6.42px;color:#109450;transform:translateY(-50%) scaleX(0.935);">main</div>
<svg style="left:767.8px;top:81.30000000000001px;" width="9.4" height="7.6" viewBox="0 0 9.4 7.6"><rect x="0.5" y="0.5" width="8.4" height="6.6" rx="1.2" fill="none" stroke="#10935a" stroke-width="0.95"/><circle cx="3.2" cy="2.8" r="1.1" fill="#10935a"/><path d="M5.8 1V5.6H2" stroke="#2a3a30" stroke-width="0.6" fill="none"/></svg>
<div class="t" style="left:779.2px;top:85.35px;font-size:6.42px;color:#109450;transform:translateY(-50%) scaleX(0.935);">obs</div>
<svg style="left:749px;top:99.2px;" width="5" height="3.5" viewBox="0 0 5 3.5"><path d="M0 0H4.6L2.3 3Z" fill="#1a1a1a"/></svg>
<svg style="left:758.7px;top:97.2px;" width="8.5" height="7" viewBox="0 0 8.5 7"><path d="M0.6 1Q0.6 0.6 1 0.6H3L3.8 1.5H7.4Q7.9 1.5 7.9 2V6Q7.9 6.5 7.4 6.5H1Q0.6 6.5 0.6 6Z" fill="none" stroke="#8e8e8e" stroke-width="0.9"/></svg>
<div class="t" style="left:770px;top:101.35px;font-size:6.42px;color:#8c8c8c;transform:translateY(-50%) scaleX(0.935);">Event sheets</div>
<svg style="left:767.8px;top:109.4px;" width="9.4" height="7.6" viewBox="0 0 9.4 7.6"><rect x="0.5" y="0.5" width="8.4" height="6.6" rx="1.2" fill="none" stroke="#10935a" stroke-width="0.95"/><path d="M3.4 0.5V7.1M6 0.5V7.1" stroke="#10935a" stroke-width="0.7"/></svg>
<div class="t" style="left:779.2px;top:113.45px;font-size:6.42px;color:#109450;transform:translateY(-50%) scaleX(0.935);">BigWin</div>
<svg style="left:767.8px;top:121.0px;" width="9.4" height="7.6" viewBox="0 0 9.4 7.6"><rect x="0.5" y="0.5" width="8.4" height="6.6" rx="1.2" fill="none" stroke="#10935a" stroke-width="0.95"/><path d="M3.4 0.5V7.1M6 0.5V7.1" stroke="#10935a" stroke-width="0.7"/></svg>
<div class="t" style="left:779.2px;top:125.05px;font-size:6.42px;color:#109450;transform:translateY(-50%) scaleX(0.935);">History</div>
<svg style="left:767.8px;top:133.1px;" width="9.4" height="7.6" viewBox="0 0 9.4 7.6"><rect x="0.5" y="0.5" width="8.4" height="6.6" rx="1.2" fill="none" stroke="#10935a" stroke-width="0.95"/><path d="M3.4 0.5V7.1M6 0.5V7.1" stroke="#10935a" stroke-width="0.7"/></svg>
<div class="t" style="left:779.2px;top:137.15px;font-size:6.42px;color:#109450;transform:translateY(-50%) scaleX(0.935);">Main</div>
<svg style="left:758.7px;top:149.3px;" width="8.5" height="7" viewBox="0 0 8.5 7"><path d="M0.6 1Q0.6 0.6 1 0.6H3L3.8 1.5H7.4Q7.9 1.5 7.9 2V6Q7.9 6.5 7.4 6.5H1Q0.6 6.5 0.6 6Z" fill="none" stroke="#8e8e8e" stroke-width="0.9"/></svg>
<div class="t" style="left:770px;top:153.45px;font-size:6.42px;color:#8c8c8c;transform:translateY(-50%) scaleX(0.935);">Scripts</div>
<svg style="left:749px;top:163.2px;" width="5" height="3.5" viewBox="0 0 5 3.5"><path d="M0 0H4.6L2.3 3Z" fill="#1a1a1a"/></svg>
<svg style="left:758.7px;top:161.2px;" width="8.5" height="7" viewBox="0 0 8.5 7"><path d="M0.6 1Q0.6 0.6 1 0.6H3L3.8 1.5H7.4Q7.9 1.5 7.9 2V6Q7.9 6.5 7.4 6.5H1Q0.6 6.5 0.6 6Z" fill="none" stroke="#8e8e8e" stroke-width="0.9"/></svg>
<div class="t" style="left:770px;top:165.35px;font-size:6.42px;color:#8c8c8c;transform:translateY(-50%) scaleX(0.935);">Object types</div>
<svg style="left:760px;top:174.29999999999998px;" width="3.5" height="4.6" viewBox="0 0 3.5 4.6"><path d="M0 0L3 2.3L0 4.6Z" fill="#1a1a1a"/></svg>
<svg style="left:768px;top:173.1px;" width="8" height="7" viewBox="0 0 8 7"><path d="M0.3 0.8H3L3.8 1.6H7.7V6.6H0.3Z" fill="#9a9a9a"/></svg>
<div class="t" style="left:779.2px;top:177.25px;font-size:6.42px;color:#18899a;transform:translateY(-50%) scaleX(0.935);">BigWin</div>
<svg style="left:758.5px;top:187.3px;" width="5" height="3.5" viewBox="0 0 5 3.5"><path d="M0 0H4.6L2.3 3Z" fill="#1a1a1a"/></svg>
<svg style="left:768px;top:185.3px;" width="8.5" height="7" viewBox="0 0 8.5 7"><path d="M0.6 1Q0.6 0.6 1 0.6H3L3.8 1.5H7.4Q7.9 1.5 7.9 2V6Q7.9 6.5 7.4 6.5H1Q0.6 6.5 0.6 6Z" fill="none" stroke="#8e8e8e" stroke-width="0.9"/></svg>
<div class="t" style="left:779.2px;top:189.45px;font-size:6.42px;color:#18899a;transform:translateY(-50%) scaleX(0.935);">History</div>
<svg style="left:777.6px;top:197px;" width="8.5" height="8" viewBox="0 0 8.5 8"><rect x="0.5" y="0.5" width="7.5" height="7.5" fill="none" stroke="#177e8e" stroke-width="0.8"/><path d="M3 0.5V8M5.5 0.5V8M0.5 3H8M0.5 5.5H8" stroke="#177e8e" stroke-width="0.6"/></svg>
<div class="t" style="left:788.9px;top:201.45px;font-size:6.42px;color:#18899a;transform:translateY(-50%) scaleX(0.935);">Array</div>
<svg style="left:777.6px;top:209px;" width="8.5" height="8" viewBox="0 0 8.5 8"><rect x="0.5" y="0.5" width="7.5" height="7.5" fill="none" stroke="#177e8e" stroke-width="0.8"/><path d="M3 0.5V8M5.5 0.5V8M0.5 3H8M0.5 5.5H8" stroke="#177e8e" stroke-width="0.6"/></svg>
<div class="t" style="left:788.9px;top:213.45px;font-size:6.42px;color:#18899a;transform:translateY(-50%) scaleX(0.935);">Array2</div>
<svg style="left:777.6px;top:221px;" width="8.5" height="8" viewBox="0 0 8.5 8"><rect x="0.5" y="0.5" width="7.5" height="7.5" fill="none" stroke="#177e8e" stroke-width="0.8"/><path d="M3 0.5V8M5.5 0.5V8M0.5 3H8M0.5 5.5H8" stroke="#177e8e" stroke-width="0.6"/></svg>
<div class="a" style="left:735px;top:223px;width:165px;height:2px;background:#1f1f1f;"></div>
<div class="a" style="left:735px;top:224.7px;width:165px;height:246px;background:#323232;border-radius:2px 2px 0 0;"></div>
<div class="a" style="left:735px;top:224.7px;width:165px;height:12.4px;background:#373737;border-radius:2px 2px 0 0;"></div>
<div class="t" style="left:741px;top:231.65px;font-size:6.74px;color:#5c5c5c;transform:translateY(-50%) scaleX(0.858);">LAYERS - MAIN</div>
<svg style="left:883px;top:227.5px;" width="5" height="8" viewBox="0 0 5 8"><path d="M1 0.5H4M1.5 0.5V4H3.5V0.5M0.5 4H4.5M2.5 4V7.5" stroke="#666" stroke-width="1" fill="#666"/></svg>
<svg style="left:893.5px;top:228.5px;" width="6" height="6" viewBox="0 0 6 6"><path d="M0.5 0.5L5 5M5 0.5L0.5 5" stroke="#666" stroke-width="0.9"/></svg>
<div class="a" style="left:737px;top:238.9px;width:163px;height:11.9px;background:#9c9c9c;border-radius:1px;"></div>
<div class="a" style="left:748.3px;top:241.4px;width:7px;height:7px;background:#353535;border-radius:1px;"></div>
<svg style="left:749.2px;top:242.3px;" width="5.5" height="5" viewBox="0 0 5.5 5"><path d="M0.6 2.6L2.1 4L4.9 0.8" stroke="#d8d8d8" stroke-width="0.95" fill="none"/></svg>
<svg style="left:757.6px;top:240.3px;" width="7" height="9" viewBox="0 0 7 9"><path d="M1.8 3.8V2.6Q1.8 0.5 3.5 0.5Q5.2 0.5 5.2 2.6V3.8" stroke="#c4c4c4" stroke-width="0.85" fill="none"/><rect x="0.5" y="3.8" width="6" height="4.7" rx="1.1" fill="none" stroke="#c4c4c4" stroke-width="0.85"/><rect x="3.05" y="5.2" width="0.9" height="1.8" fill="#c4c4c4"/></svg>
<div class="t" style="left:768.8px;top:245.35px;font-size:6.42px;color:#1e1e1e;transform:translateY(-50%) scaleX(0.935);">bigwin</div>
<div class="t" style="right:3px;top:245.35px;font-size:6.42px;color:#4a4a4a;transform-origin:right center;transform:translateY(-50%) scaleX(0.935);">7</div>
<div class="a" style="left:748.3px;top:255.09999999999997px;width:6.9px;height:6.6px;background:#2a2a2a;border-radius:1px;"></div>
<svg style="left:757.6px;top:253.79999999999998px;" width="7" height="9" viewBox="0 0 7 9"><path d="M1.8 3.8V2.6Q1.8 0.5 3.5 0.5Q5.2 0.5 5.2 2.6V3.8" stroke="#8a8a8a" stroke-width="0.85" fill="none"/><rect x="0.5" y="3.8" width="6" height="4.7" rx="1.1" fill="none" stroke="#8a8a8a" stroke-width="0.85"/><rect x="3.05" y="5.2" width="0.9" height="1.8" fill="#8a8a8a"/></svg>
<div class="t" style="left:768.8px;top:258.85px;font-size:6.42px;color:#8a8a8a;transform:translateY(-50%) scaleX(0.935);">FreeSpinScreen</div>
<div class="t" style="right:3px;top:258.85px;font-size:6.42px;color:#6a6a6a;transform-origin:right center;transform:translateY(-50%) scaleX(0.935);">6</div>
<div class="a" style="left:748.3px;top:268.15px;width:6.9px;height:6.6px;background:#2a2a2a;border-radius:1px;"></div>
<svg style="left:757.6px;top:266.84999999999997px;" width="7" height="9" viewBox="0 0 7 9"><path d="M1.8 3.8V2.6Q1.8 0.5 3.5 0.5Q5.2 0.5 5.2 2.6V3.8" stroke="#8a8a8a" stroke-width="0.85" fill="none"/><rect x="0.5" y="3.8" width="6" height="4.7" rx="1.1" fill="none" stroke="#8a8a8a" stroke-width="0.85"/><rect x="3.05" y="5.2" width="0.9" height="1.8" fill="#8a8a8a"/></svg>
<div class="t" style="left:768.8px;top:271.90px;font-size:6.42px;color:#8a8a8a;transform:translateY(-50%) scaleX(0.935);">StartScatter</div>
<div class="t" style="right:3px;top:271.90px;font-size:6.42px;color:#6a6a6a;transform-origin:right center;transform:translateY(-50%) scaleX(0.935);">5</div>
<div class="a" style="left:748.3px;top:281.2px;width:6.9px;height:6.6px;background:#2a2a2a;border-radius:1px;"></div>
<svg style="left:757.6px;top:279.9px;" width="7" height="9" viewBox="0 0 7 9"><path d="M1.8 3.8V2.6Q1.8 0.5 3.5 0.5Q5.2 0.5 5.2 2.6V3.8" stroke="#8a8a8a" stroke-width="0.85" fill="none"/><rect x="0.5" y="3.8" width="6" height="4.7" rx="1.1" fill="none" stroke="#8a8a8a" stroke-width="0.85"/><rect x="3.05" y="5.2" width="0.9" height="1.8" fill="#8a8a8a"/></svg>
<div class="t" style="left:768.8px;top:284.95px;font-size:6.42px;color:#8a8a8a;transform:translateY(-50%) scaleX(0.935);">historyDetail</div>
<div class="t" style="right:3px;top:284.95px;font-size:6.42px;color:#6a6a6a;transform-origin:right center;transform:translateY(-50%) scaleX(0.935);">4</div>
<div class="a" style="left:748.3px;top:294.24999999999994px;width:6.9px;height:6.6px;background:#2a2a2a;border-radius:1px;"></div>
<svg style="left:757.6px;top:292.94999999999993px;" width="7" height="9" viewBox="0 0 7 9"><path d="M1.8 3.8V2.6Q1.8 0.5 3.5 0.5Q5.2 0.5 5.2 2.6V3.8" stroke="#8a8a8a" stroke-width="0.85" fill="none"/><rect x="0.5" y="3.8" width="6" height="4.7" rx="1.1" fill="none" stroke="#8a8a8a" stroke-width="0.85"/><rect x="3.05" y="5.2" width="0.9" height="1.8" fill="#8a8a8a"/></svg>
<div class="t" style="left:768.8px;top:298.00px;font-size:6.42px;color:#8a8a8a;transform:translateY(-50%) scaleX(0.935);">history</div>
<div class="t" style="right:3px;top:298.00px;font-size:6.42px;color:#6a6a6a;transform-origin:right center;transform:translateY(-50%) scaleX(0.935);">3</div>
<div class="a" style="left:748.3px;top:307.29999999999995px;width:6.9px;height:6.6px;background:#2a2a2a;border-radius:1px;"></div>
<svg style="left:757.6px;top:305.99999999999994px;" width="7" height="9" viewBox="0 0 7 9"><path d="M1.8 3.8V2.6Q1.8 0.5 3.5 0.5Q5.2 0.5 5.2 2.6V3.8" stroke="#8a8a8a" stroke-width="0.85" fill="none"/><rect x="0.5" y="3.8" width="6" height="4.7" rx="1.1" fill="none" stroke="#8a8a8a" stroke-width="0.85"/><rect x="3.05" y="5.2" width="0.9" height="1.8" fill="#8a8a8a"/></svg>
<div class="t" style="left:768.8px;top:311.05px;font-size:6.42px;color:#8a8a8a;transform:translateY(-50%) scaleX(0.935);">paytable</div>
<div class="t" style="right:3px;top:311.05px;font-size:6.42px;color:#6a6a6a;transform-origin:right center;transform:translateY(-50%) scaleX(0.935);">2</div>
<svg style="left:748.6px;top:321.04999999999995px;" width="6.5" height="5" viewBox="0 0 6.5 5"><path d="M0.6 2.6L2.4 4.3L5.9 0.6" stroke="#c8c8c8" stroke-width="0.9" fill="none"/></svg>
<svg style="left:757.6px;top:319.04999999999995px;" width="7" height="9" viewBox="0 0 7 9"><path d="M1.8 3.8V2.6Q1.8 0.5 3.5 0.5Q5.2 0.5 5.2 2.6V3.8" stroke="#8a8a8a" stroke-width="0.85" fill="none"/><rect x="0.5" y="3.8" width="6" height="4.7" rx="1.1" fill="none" stroke="#8a8a8a" stroke-width="0.85"/><rect x="3.05" y="5.2" width="0.9" height="1.8" fill="#8a8a8a"/></svg>
<div class="t" style="left:768.8px;top:324.10px;font-size:6.42px;color:#8a8a8a;transform:translateY(-50%) scaleX(0.935);">gui</div>
<div class="t" style="right:3px;top:324.10px;font-size:6.42px;color:#6a6a6a;transform-origin:right center;transform:translateY(-50%) scaleX(0.935);">1</div>
<svg style="left:748.6px;top:334.09999999999997px;" width="6.5" height="5" viewBox="0 0 6.5 5"><path d="M0.6 2.6L2.4 4.3L5.9 0.6" stroke="#c8c8c8" stroke-width="0.9" fill="none"/></svg>
<svg style="left:757.6px;top:332.09999999999997px;" width="7" height="9" viewBox="0 0 7 9"><path d="M1.8 3.8V2.6Q1.8 0.5 3.5 0.5Q5.2 0.5 5.2 2.6V3.8" stroke="#8a8a8a" stroke-width="0.85" fill="none"/><rect x="0.5" y="3.8" width="6" height="4.7" rx="1.1" fill="none" stroke="#8a8a8a" stroke-width="0.85"/><rect x="3.05" y="5.2" width="0.9" height="1.8" fill="#8a8a8a"/></svg>
<div class="t" style="left:768.8px;top:337.15px;font-size:6.42px;color:#8a8a8a;transform:translateY(-50%) scaleX(0.935);">sym</div>
<div class="t" style="right:3px;top:337.15px;font-size:6.42px;color:#6a6a6a;transform-origin:right center;transform:translateY(-50%) scaleX(0.935);">0</div>
<div class="a" style="left:735px;top:471px;width:165px;height:15px;background:#282828;"></div>
<div class="a" style="left:735.4px;top:472.7px;width:83.2px;height:13.3px;background:#a9a9a9;border-radius:2px 2px 0 0;"></div>
<div class="t" style="left:754.00px;top:479.85px;font-size:6.42px;color:#1e1e1e;transform:translateY(-50%) scaleX(0.926);">Layers - main</div>
<svg style="left:809.5px;top:476.8px;" width="5" height="5" viewBox="0 0 5 5"><path d="M0.5 0.5L4.5 4.5M4.5 0.5L0.5 4.5" stroke="#333" stroke-width="0.8"/></svg>
<div class="t" style="left:850.44px;top:479.85px;font-size:6.42px;color:#4a4a4a;transform:translateY(-50%) scaleX(0.935);">Tilemap</div>
<svg style="left:273.3px;top:68.6px;" width="8.5" height="10" viewBox="0 0 8.5 10"><path d="M0.6 1.2Q0.6 0.6 1.2 0.6H5L7.8 3.4V8.8Q7.8 9.4 7.2 9.4H1.2Q0.6 9.4 0.6 8.8Z" fill="none" stroke="#e4e4e4" stroke-width="0.9"/><path d="M5 0.6V3.4H7.8" fill="none" stroke="#e4e4e4" stroke-width="0.8"/></svg>
<svg style="left:287px;top:70.3px;" width="9" height="7" viewBox="0 0 9 7"><path d="M0.6 1.1Q0.6 0.6 1.1 0.6H3.3L4.2 1.6H8Q8.4 1.6 8.4 2V6Q8.4 6.5 7.9 6.5H1.1Q0.6 6.5 0.6 6Z" fill="none" stroke="#e4e4e4" stroke-width="0.9"/><path d="M0.6 2.8H8.4" stroke="#e4e4e4" stroke-width="0.7"/></svg>
<div class="a" style="left:299.0px;top:72.0px;width:2px;height:2px;background:#1e1e1e;"></div>
<svg style="left:305px;top:70px;" width="8" height="8" viewBox="0 0 8 8"><path d="M0.5 1Q0.5 0.5 1 0.5H6L7.5 2V7Q7.5 7.5 7 7.5H1Q0.5 7.5 0.5 7Z" fill="#e4e4e4"/><rect x="2" y="1.2" width="3.5" height="1.8" fill="#585858"/><circle cx="4" cy="5.2" r="1" fill="#585858"/></svg>
<div class="a" style="left:316.70000000000005px;top:72.0px;width:2px;height:2px;background:#1e1e1e;"></div>
<svg style="left:323.5px;top:69px;" width="8" height="10" viewBox="0 0 8 10"><path d="M2.5 2V1.2Q2.5 0.6 3.1 0.6H5.5L7.4 2.5V8.8Q7.4 9.4 6.8 9.4H3.1Q2.5 9.4 2.5 8.8" fill="none" stroke="#e4e4e4" stroke-width="0.9"/><path d="M0.4 5.2H4.2M3 3.8L4.4 5.2L3 6.6" stroke="#e4e4e4" stroke-width="0.9" fill="none"/></svg>
<div class="a" style="left:337.5px;top:68px;width:0.8px;height:12px;background:#4e4e4e;"></div>
<svg style="left:342.5px;top:71.5px;" width="9" height="5" viewBox="0 0 9 5"><path d="M1.5 4Q3 1.2 5.5 1.6Q7.5 2 8.5 4.5" stroke="#7a7a7a" stroke-width="1" fill="none"/><path d="M0 1L2.5 0.8L2 3.5Z" fill="#7a7a7a"/></svg>
<div class="a" style="left:354.3px;top:72.0px;width:2px;height:2px;background:#505050;"></div>
<svg style="left:360.5px;top:71.5px;" width="9" height="5" viewBox="0 0 9 5"><path d="M7.5 4Q6 1.2 3.5 1.6Q1.5 2 0.5 4.5" stroke="#7a7a7a" stroke-width="1" fill="none"/><path d="M9 1L6.5 0.8L7 3.5Z" fill="#7a7a7a"/></svg>
<div class="a" style="left:372.70000000000005px;top:72.0px;width:2px;height:2px;background:#505050;"></div>
<svg style="left:379px;top:69.5px;" width="9" height="9" viewBox="0 0 9 9"><circle cx="2" cy="7" r="1.5" fill="none" stroke="#e4e4e4" stroke-width="0.9"/><circle cx="7" cy="7" r="1.5" fill="none" stroke="#e4e4e4" stroke-width="0.9"/><path d="M2.8 5.8L7.5 0.3M6.2 5.8L1.5 0.3" stroke="#e4e4e4" stroke-width="0.9"/></svg>
<svg style="left:393.5px;top:69px;" width="9" height="10" viewBox="0 0 9 10"><rect x="0.6" y="0.6" width="5.5" height="6.8" rx="0.8" fill="none" stroke="#e4e4e4" stroke-width="0.8"/><rect x="2.6" y="2.4" width="5.6" height="7" rx="0.8" fill="#585858" stroke="#e4e4e4" stroke-width="0.9"/></svg>
<svg style="left:407.5px;top:69px;" width="9" height="10" viewBox="0 0 9 10"><rect x="0.7" y="1.4" width="7.4" height="8" rx="1" fill="none" stroke="#e4e4e4" stroke-width="0.9"/><rect x="2.6" y="0.4" width="3.6" height="2" rx="0.5" fill="#e4e4e4"/></svg>
<div class="a" style="left:420px;top:68px;width:0.8px;height:12px;background:#4e4e4e;"></div>
<svg style="left:426.7px;top:69.7px;" width="9.3" height="7.5" viewBox="0 0 9.3 7.5"><path d="M4.4 0.2V7.3H0.2Z" fill="#e4e4e4"/><path d="M4.9 0.2L9.1 7.3H4.9Z" fill="#a8a8a8"/><circle cx="6.2" cy="5.6" r="0.7" fill="#222"/></svg>
<div class="a" style="left:439.0px;top:72.0px;width:2px;height:2px;background:#1e1e1e;"></div>
<svg style="left:445.7px;top:69px;" width="7.6" height="9" viewBox="0 0 7.6 9"><path d="M0.2 4.3L7.4 0.2V4.3Z" fill="#e4e4e4"/><path d="M0.2 4.8L7.4 8.8V4.8Z" fill="#a8a8a8"/><circle cx="5.6" cy="6.3" r="0.7" fill="#222"/></svg>
<div class="a" style="left:457.0px;top:72.0px;width:2px;height:2px;background:#1e1e1e;"></div>
<svg style="left:463.5px;top:69.5px;" width="9" height="9" viewBox="0 0 9 9"><path d="M4.5 1Q8 1 8 4.5Q8 8 4.5 8Q1 8 1 4.5" stroke="#e4e4e4" stroke-width="1" fill="none"/><path d="M4.5 -0.5V2.5L2.5 1Z" fill="#e4e4e4"/><circle cx="4.5" cy="4.5" r="0.9" fill="#e4e4e4"/></svg>
<div class="a" style="left:475.0px;top:72.0px;width:2px;height:2px;background:#1e1e1e;"></div>
<svg style="left:481.5px;top:69.5px;" width="9" height="9" viewBox="0 0 9 9"><path d="M4.5 1Q1 1 1 4.5Q1 8 4.5 8Q8 8 8 4.5" stroke="#e4e4e4" stroke-width="1" fill="none"/><path d="M4.5 -0.5V2.5L6.5 1Z" fill="#e4e4e4"/><circle cx="4.5" cy="4.5" r="0.9" fill="#e4e4e4"/></svg>
<div class="a" style="left:493.0px;top:72.0px;width:2px;height:2px;background:#1e1e1e;"></div>
<div class="a" style="left:499.5px;top:68px;width:0.8px;height:12px;background:#4e4e4e;"></div>
<svg style="left:504.9px;top:69.5px;" width="9" height="8.5" viewBox="0 0 9 8.5"><path d="M2.3 0.3V5.6Q2.3 6.3 3 6.3H8.6M0.3 2.3H5.6Q6.3 2.3 6.3 3V8.3" stroke="#e4e4e4" stroke-width="1.15" fill="none"/></svg>
<div class="a" style="left:516.6px;top:72.0px;width:2px;height:2px;background:#1e1e1e;"></div>
<svg style="left:523.8px;top:69.5px;" width="8.5" height="8.5" viewBox="0 0 8.5 8.5"><path d="M1 8L8 1M8 1H4.8M8 1V4.2M1 8H4.2M1 8V4.8" stroke="#e4e4e4" stroke-width="1" fill="none"/></svg>
<div class="a" style="left:537.3px;top:68px;width:0.8px;height:12px;background:#4e4e4e;"></div>
<svg style="left:543.4px;top:70px;" width="8" height="8" viewBox="0 0 8 8"><circle cx="3.2" cy="3.2" r="2.6" fill="none" stroke="#e4e4e4" stroke-width="0.9"/><path d="M5 5L7.3 7.3" stroke="#e4e4e4" stroke-width="1.2"/><path d="M1.9 3.2H4.5M3.2 1.9V4.5" stroke="#e4e4e4" stroke-width="0.7"/></svg>
<svg style="left:557.5px;top:70px;" width="8" height="8" viewBox="0 0 8 8"><circle cx="3.2" cy="3.2" r="2.6" fill="none" stroke="#e4e4e4" stroke-width="0.9"/><path d="M5 5L7.3 7.3" stroke="#e4e4e4" stroke-width="1.2"/><path d="M1.9 3.2H4.5" stroke="#e4e4e4" stroke-width="0.7"/></svg>
<svg style="left:571.5px;top:70px;" width="8" height="8" viewBox="0 0 8 8"><circle cx="3.2" cy="3.2" r="2.6" fill="none" stroke="#e4e4e4" stroke-width="0.9"/><path d="M5 5L7.3 7.3" stroke="#e4e4e4" stroke-width="1.2"/></svg>
<div class="a" style="left:586.2px;top:68px;width:0.8px;height:12px;background:#4e4e4e;"></div>
<svg style="left:591.8px;top:69.6px;" width="8" height="7.8" viewBox="0 0 8 7.8"><rect x="0.5" y="0.5" width="7" height="6.8" rx="1.4" fill="#c4c4c4" stroke="#e4e4e4" stroke-width="1"/><path d="M1.5 1.6L6.6 6.3H1.5Z" fill="#333"/></svg>
<svg style="left:272.8px;top:83.8px;" width="8" height="8" viewBox="0 0 8 8"><path d="M4 0.3L7.7 2.4L4 4.5L0.3 2.4Z" fill="#e4e4e4"/><path d="M0.5 4.3L4 6.3L7.5 4.3M0.5 6L4 8L7.5 6" stroke="#e4e4e4" stroke-width="0.7" fill="none"/></svg>
<div class="a" style="left:303.0px;top:86.3px;width:2px;height:2px;background:#1e1e1e;"></div>
<div class="a" style="left:309px;top:82px;width:0.8px;height:12px;background:#4e4e4e;"></div>
<svg style="left:314.5px;top:83.3px;" width="9" height="9" viewBox="0 0 9 9"><circle cx="4.5" cy="4.5" r="3.9" fill="none" stroke="#e4e4e4" stroke-width="0.9"/><path d="M3.4 2.7L6.3 4.5L3.4 6.3Z" fill="#e4e4e4"/></svg>
<svg style="left:328.5px;top:83.3px;" width="9" height="9" viewBox="0 0 9 9"><g transform="translate(4.5 4.5)"><circle r="3" fill="#e4e4e4"/><g fill="#e4e4e4"><rect x="-0.9" y="-4.4" width="1.8" height="8.8"/><rect x="-0.9" y="-4.4" width="1.8" height="8.8" transform="rotate(45)"/><rect x="-0.9" y="-4.4" width="1.8" height="8.8" transform="rotate(90)"/><rect x="-0.9" y="-4.4" width="1.8" height="8.8" transform="rotate(135)"/></g><circle r="1.2" fill="#585858"/></g></svg>
<div class="t" style="left:364px;top:102.95px;font-size:6.42px;color:#d6d6d6;transform:translateY(-50%) scaleX(0.934);">Tolerance</div>
<div class="a" style="left:396px;top:101.2px;width:64px;height:2.2px;background:#3b3b3b;border-radius:1.1px;"></div>
<div class="a" style="left:398.3px;top:97.8px;width:4.6px;height:9px;background:#9c9c9c;border-radius:1.5px;"></div>
<div class="a" style="left:464.4px;top:97.8px;width:28.5px;height:10px;background:#3e3e3e;border-radius:1px;"></div>
<div class="t" style="left:468px;top:103.25px;font-size:6.42px;color:#dcdcdc;transform:translateY(-50%) scaleX(0.935);">0</div>
<div class="a" style="left:497.8px;top:96px;width:0.8px;height:13px;background:#4e4e4e;"></div>
<svg style="left:505.2px;top:99.3px;" width="7" height="6" viewBox="0 0 7 6"><path d="M0.7 3L2.6 4.9L6.3 0.7" stroke="#ececec" stroke-width="1.25" fill="none"/></svg>
<div class="t" style="left:513.8px;top:103.25px;font-size:6.42px;color:#d6d6d6;transform:translateY(-50%) scaleX(0.941);">Flood Fill</div>
<svg style="left:273.5px;top:112.5px;" width="8" height="8" viewBox="0 0 8 8"><rect x="0.6" y="0.6" width="6.8" height="6.8" rx="0.5" fill="none" stroke="#dadada" stroke-width="0.8"/></svg>
<svg style="left:273.5px;top:142px;" width="8" height="8" viewBox="0 0 8 8"><path d="M0.8 7.2L6.8 1.2" stroke="#dadada" stroke-width="1.3"/></svg>
<svg style="left:273.5px;top:154.5px;" width="8" height="8" viewBox="0 0 8 8"><path d="M2.5 5.5L7 1" stroke="#dadada" stroke-width="1.1"/><circle cx="1.6" cy="6.4" r="1.2" fill="#dadada"/></svg>
<svg style="left:273.5px;top:169px;" width="8" height="8" viewBox="0 0 8 8"><path d="M0.8 7.2L7.2 0.8" stroke="#dadada" stroke-width="0.7"/></svg>
<svg style="left:273.5px;top:184.6px;" width="8" height="8" viewBox="0 0 8 8"><rect x="0.8" y="0.8" width="6.4" height="6.4" rx="1.2" fill="none" stroke="#dadada" stroke-width="0.9"/><path d="M4 2.5V5.5M2.5 4H5.5" stroke="#dadada" stroke-width="0.6"/></svg>
<svg style="left:273.5px;top:199.2px;" width="8" height="8" viewBox="0 0 8 8"><circle cx="4" cy="4" r="3.2" fill="none" stroke="#dadada" stroke-width="0.9"/><path d="M4 3V5M3 4H5" stroke="#dadada" stroke-width="0.6"/></svg>
<div class="a" style="left:270.5px;top:210.5px;width:14.3px;height:14.3px;background:#f0f0f0;border-radius:1px;"></div>
<svg style="left:272.5px;top:212.5px;" width="10" height="10" viewBox="0 0 10 10"><path d="M1 4L4.5 0.8L8 4.3L4.5 7.8Z" fill="none" stroke="#222" stroke-width="0.9"/><path d="M1 4.2L8 4.3L4.5 7.8Z" fill="#222"/><circle cx="8.6" cy="7.2" r="0.9" fill="#222"/></svg>
<svg style="left:273.5px;top:227px;" width="8" height="8" viewBox="0 0 8 8"><path d="M1.2 6.8L5 3M3.8 2.2L5.8 4.2" stroke="#dadada" stroke-width="1.3" fill="none"/><path d="M5 1.5Q6.3 0 7.3 0.9Q8.2 1.9 6.6 3.1Z" fill="#dadada"/></svg>
<div class="a" style="left:271px;top:240px;width:13px;height:0.7px;background:#3c3c3c;"></div>
<svg style="left:273.5px;top:247px;" width="8" height="8" viewBox="0 0 8 8"><path d="M4 0.5Q4.6 3.4 7.5 4Q4.6 4.6 4 7.5Q3.4 4.6 0.5 4Q3.4 3.4 4 0.5Z" fill="none" stroke="#dadada" stroke-width="0.8"/></svg>
<svg style="left:273.5px;top:260px;" width="8" height="8" viewBox="0 0 8 8"><path d="M4 1.2L1 6.8H7Z" fill="none" stroke="#dadada" stroke-width="0.7"/><circle cx="4" cy="1.2" r="1.1" fill="#dadada"/><circle cx="1" cy="6.8" r="1.1" fill="#dadada"/><circle cx="7" cy="6.8" r="1.1" fill="#dadada"/></svg>
<svg style="left:262px;top:80px;" width="80" height="95" viewBox="0 0 80 95"><path d="M25.6 47.5 L25.6 6.5 Q25.6 1.8 30.5 1.8 Q35.4 1.8 35.4 6.5 L35.4 26.5 Q38.5 22.5 42.5 25 Q46.5 21.5 51 25.5 Q56.5 23 60.5 27 Q68.5 29.5 68.5 40 L66.5 60 L62.8 86.5 L27.8 86.5 L24 70 Q18 60 11.5 51 Q8 46.5 8.5 43 Q10 39.5 14 41 Q19 43 25.6 47.5 Z" fill="#fcd2c2" stroke="#050505" stroke-width="3.2" stroke-linejoin="round"/></svg></body></html>
